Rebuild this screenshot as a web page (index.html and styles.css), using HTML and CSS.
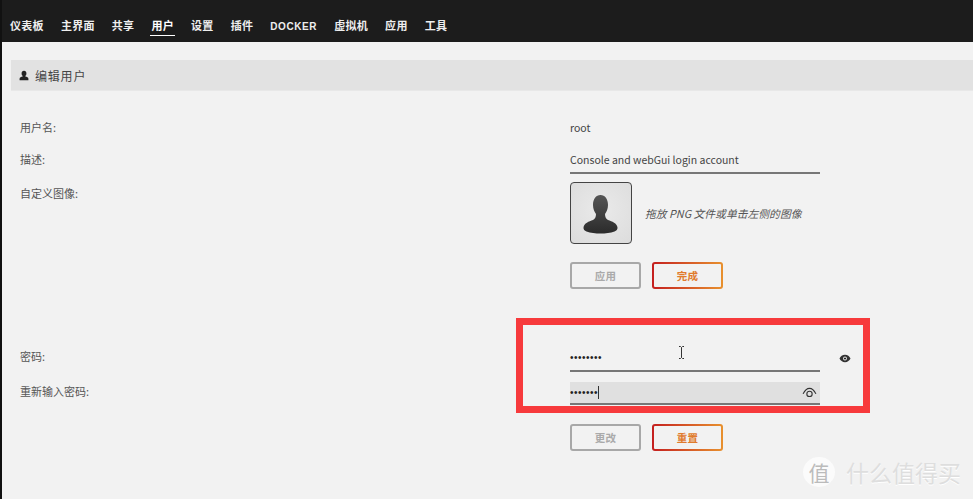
FILE: index.html
```html
<!DOCTYPE html>
<html lang="zh-CN">
<head>
  <meta charset="UTF-8" />
  <meta name="viewport" content="width=device-width, initial-scale=1" />
  <title>编辑用户</title>
  <link rel="stylesheet" href="styles.css">
</head>
<body>
  <nav class="nav">
    <a>仪表板</a>
    <a>主界面</a>
    <a>共享</a>
    <a class="active">用户</a>
    <a>设置</a>
    <a>插件</a>
    <a class="latin">DOCKER</a>
    <a>虚拟机</a>
    <a>应用</a>
    <a>工具</a>
  </nav>

  <main class="main">
    <h2 class="title">
      <svg class="title-icon" viewBox="0 0 12 12"><path d="M6 .3c1.900 0 2.900 1.400 2.900 3.200 0 1.300-.5 2.300-1.300 2.900v.9c1.700.6 3.700 1 3.700 2.700v1.700H.7V10c0-1.700 2-2.100 3.700-2.700v-.9C3.600 5.800 3.100 4.800 3.100 3.500 3.100 1.700 4.100.3 6 .3z"/></svg>
      编辑用户
    </h2>

    <form class="form">
      <div class="row row-name">
        <label>用户名:</label>
        <span class="value">root</span>
      </div>
      <div class="row row-desc">
        <label>描述:</label>
        <div class="field">Console and webGui login account</div>
      </div>
      <div class="row row-image">
        <label>自定义图像:</label>
        <div class="picker">
          <div class="avatar">
            <svg viewBox="0 0 60 60" width="60" height="60">
              <defs>
                <linearGradient id="bust" x1="0" y1="0" x2="0" y2="1">
                  <stop offset="0" stop-color="#555"/>
                  <stop offset="1" stop-color="#2b2b2b"/>
                </linearGradient>
              </defs>
              <path fill="url(#bust)" d="M29.500 12c4.500 0 7.500 4 7.500 10 0 4-1.500 7-3 9 0 3 1 5 3 6 4 1.500 9 3 9.500 7.500.2 2-1 3-3 4-4 1.500-9 2-14 2s-10-.5-14-2c-2-1-3.200-2-3-4 .5-4.500 5.500-6 9.500-7.500 2-1 3-3 3-6-1.500-2-3-5-3-9 0-6 3-10 7.500-10z"/>
            </svg>
          </div>
          <em class="hint">拖放 PNG 文件或单击左侧的图像</em>
        </div>
      </div>
      <div class="row row-buttons">
        <span></span>
        <div class="buttons">
          <button type="button" class="btn">应用</button>
          <button type="button" class="btn btn-main">完成</button>
        </div>
      </div>

      <div class="row row-pass">
        <label>密码:</label>
        <div class="field field-pass">••••••••</div>
        <svg class="eye" viewBox="0 0 14 10" width="12" height="9"><path d="M7 .7C4 .7 1.700 2.700.6 5c1.100 2.300 3.400 4.300 6.400 4.300s5.300-2 6.400-4.300C12.300 2.700 10 .7 7 .7z" fill="#333"/><circle cx="7" cy="5" r="2.200" fill="#f2f2f2"/><circle cx="7" cy="5" r="1.300" fill="#222"/></svg>
      </div>
      <div class="row row-repeat">
        <label>重新输入密码:</label>
        <div class="field field-focus">
          <span>•••••••<i class="caret"></i></span>
          <svg viewBox="0 0 16 12" width="15" height="11"><path d="M1 7.500C3 3.500 5.500 1.500 8 1.500s5 2 7 6" fill="none" stroke="#333" stroke-width="1.200"/><circle cx="8" cy="7.500" r="2.900" fill="none" stroke="#333" stroke-width="1.200"/></svg>
        </div>
      </div>
      <div class="row row-buttons row-buttons-last">
        <span></span>
        <div class="buttons">
          <button type="button" class="btn">更改</button>
          <button type="button" class="btn btn-main">重置</button>
        </div>
      </div>
    </form>
  </main>

  <!-- annotation drawn over the screenshot -->
  <div class="mark"></div>
  <svg class="ibeam" viewBox="0 0 7 13" width="7" height="13"><path d="M1 .5h1.500l1 1 1-1H6M3.500 1.500v10M1 12.500h1.500l1-1 1 1H6" fill="none" stroke="#333" stroke-width="1"/></svg>

  <div class="watermark">
    <span class="watermark-badge">值</span>
    <span class="watermark-text">什么值得买</span>
  </div>
</body>
</html>
```

FILE: styles.css
```css
* { box-sizing: border-box; }
html, body { height: 100%; }
body {
  margin: 0;
  border-left: 2px solid #111;
  background: #f2f2f2; color: #444;
  font-family: "Noto Sans CJK SC", "Noto Sans", sans-serif;
  font-size: 11px;
  overflow: hidden;
}

.nav {
  display: flex; align-items: center; gap: 17px;
  height: 42px; padding: 8px 0 0 8px;
  background: #1c1c1c; color: #eee;
}
.nav a {
  position: relative;
  font-size: 11px; font-weight: 700; letter-spacing: .3px;
  line-height: 16px;
}
.nav a.latin {
  margin-top: 3px;
  font-family: "Liberation Sans", sans-serif; font-size: 10px; letter-spacing: .6px;
}
.nav a.active { color: #fff; }
.nav a.active::after {
  content: ""; position: absolute; left: -1px; right: -1px; bottom: -3px;
  height: 1.500px; background: #fff;
}

.main { padding: 18px 0 0 9px; }
.title {
  display: flex; align-items: center; gap: 6px;
  height: 31px; margin: 0; padding-left: 8px;
  background: #e2e2e2; color: #444;
  font-size: 12px; font-weight: 400; letter-spacing: .8px;
  border-bottom: 1px solid #e8e8e8;
}
.title-icon { width: 10px; height: 11px; fill: #222; }

.form { padding: 21px 0 0 9px; }
.row { display: grid; grid-template-columns: 550px 250px auto; align-items: center; }
.row label { color: #555; padding-bottom: 2px; }
.row-name { height: 32px; }
.row-desc { height: 32px; }
.value { color: #444; font-size: 10.500px; padding-bottom: 2px; }
.field { border-bottom: 2px solid #777; color: #444; font-size: 10.500px; }
.row-desc .field { height: 30px; line-height: 31px; margin-top: -2px; }

.row-image { margin-top: 6px; align-items: start; }
.row-image label { padding-top: 3px; }
.picker { display: flex; align-items: center; gap: 13px; white-space: nowrap; }
.avatar {
  width: 62px; height: 62px;
  border: 1px solid #444; border-radius: 4px;
  background: radial-gradient(circle at 50% 45%, #eaeaea, #dcdcdc);
}
.avatar svg { display: block; }
.hint { font-size: 10.800px; color: #555; }

.row-buttons { margin-top: 18px; }
.buttons { display: flex; gap: 11px; }
.btn {
  width: 71px; height: 27px; padding: 0;
  background: #f2f2f2; color: #aaa;
  border: 2px solid #a8a8a8; border-radius: 3px;
  font: 700 10.500px "Noto Sans CJK SC", sans-serif;
  letter-spacing: .3px;
}
.btn-main {
  color: #e07b2e;
  border-color: transparent;
  background:
    linear-gradient(#f2f2f2, #f2f2f2) padding-box,
    linear-gradient(90deg, #c41f1f, #e8912e) border-box;
}

.row-pass { margin-top: 55px; height: 28px; }
.row-pass label { padding-bottom: 4px; }
.field-pass, .field-focus {
  font-family: "Liberation Sans", sans-serif;
  font-size: 10px; letter-spacing: .5px; color: #222;
}
.field-pass { height: 28px; line-height: 27px; }
.eye { margin-left: 19px; }
.row-repeat { margin-top: 10px; }
.row-repeat label { padding-bottom: 6px; }
.field-focus {
  display: flex; align-items: center; justify-content: space-between;
  height: 23px; padding-right: 3px;
  background: #e0e0e0;
}
.field-focus span { display: flex; align-items: center; }
.caret { width: 1px; height: 13px; background: #333; }
.row-buttons-last { margin-top: 19px; }

.mark {
  position: absolute; left: 516px; top: 318px;
  width: 354px; height: 95px;
  border: 7px solid #f73a3c;
}
.ibeam { position: absolute; left: 678px; top: 346px; }

.watermark {
  position: absolute; left: 803px; top: 456px;
  display: flex; align-items: center; gap: 11px;
  color: #dedede;
}
.watermark-badge {
  width: 32px; height: 30px; border-radius: 50%;
  background: #fbfbfb; color: #bbb;
  font-size: 21px; line-height: 30px; text-align: center;
}
.watermark-text {
  font-size: 23px; line-height: 32px;
  text-shadow: 0 1px 0 #fff;
}
```
